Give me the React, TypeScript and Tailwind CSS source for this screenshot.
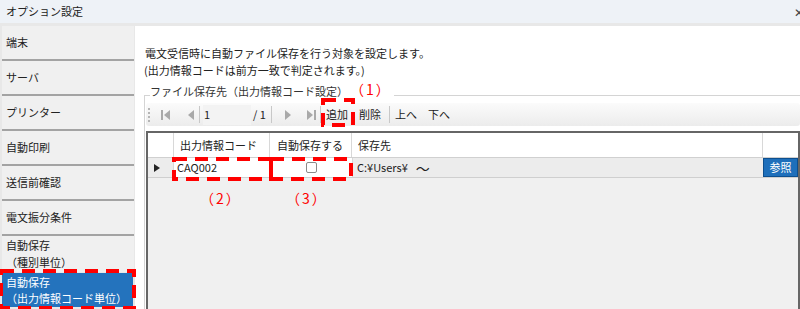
const font = { fontFamily: '"Noto Sans CJK JP", "Noto Sans", sans-serif' };

function DashBox({ className }: { className: string }) {
  return (
    <svg className={`pointer-events-none absolute ${className}`} preserveAspectRatio="none">
      <rect x="2" y="2" width="calc(100% - 4px)" height="calc(100% - 4px)" fill="none" stroke="#ff0000" strokeWidth="4" strokeDasharray="13 8" />
    </svg>
  );
}

function NavIcon({ kind }: { kind: 'first' | 'prev' | 'next' | 'last' }) {
  return (
    <svg width="12" height="12" viewBox="0 0 12 12" className="shrink-0">
      {kind === 'first' && (
        <>
          <rect x="1" y="1" width="2" height="10" fill="#a9a9a9" />
          <path d="M10 1 L4 6 L10 11 Z" fill="#a9a9a9" />
        </>
      )}
      {kind === 'prev' && <path d="M9 1 L3 6 L9 11 Z" fill="#a9a9a9" />}
      {kind === 'next' && <path d="M3 1 L9 6 L3 11 Z" fill="#a9a9a9" />}
      {kind === 'last' && (
        <>
          <path d="M2 1 L8 6 L2 11 Z" fill="#a9a9a9" />
          <rect x="9" y="1" width="2" height="10" fill="#a9a9a9" />
        </>
      )}
    </svg>
  );
}

const Sep = ({ className }: { className: string }) => <div className={`h-[17px] w-px bg-[#c8c8c8] ${className}`} />;

const menu = ['端末', 'サーバ', 'プリンター', '自動印刷', '送信前確認', '電文振分条件'];

export default function App() {
  return (
    <div className="h-[309px] w-[800px] overflow-hidden bg-[#e8e8e8] text-[11px] text-[#222]" style={font}>
      {/* title bar */}
      <div className="flex h-[23px] items-center justify-between bg-[#eef2f7] pl-[6px]">
        <span className="leading-none">オプション設定</span>
        <span className="mr-[-4px] text-[12px] leading-none text-[#444]">✕</span>
      </div>

      <div className="flex h-[286px] pt-[3px]">
        {/* sidebar */}
        <div className="flex w-[134px] flex-col bg-[#e8e8e8] pl-[2px]">
          {menu.map((m) => (
            <div key={m} className="flex h-[35px] items-center border-b-2 border-[#a3a3a3] bg-[#f0f0f0] pl-[4px] leading-none">
              {m}
            </div>
          ))}
          <div className="flex h-[36px] flex-col justify-center gap-[6px] bg-[#f0f0f0] pl-[4px] leading-none">
            <span>自動保存</span>
            <span>（種別単位）</span>
          </div>
          <div className="relative mt-[1px]">
            <div className="mr-[1px] flex h-[34px] flex-col justify-center gap-[5px] bg-[#2473bd] pl-[4px] leading-none text-white">
              <span>自動保存</span>
              <span>（出力情報コード単位）</span>
            </div>
            <DashBox className="left-[-3px] top-[-4px] h-[41px] w-[137px]" />
          </div>
        </div>

        {/* content */}
        <div className="ml-[1px] flex flex-1 flex-col bg-white pl-[9px]">
          <div className="flex flex-col gap-[4px] pt-[21px] leading-[13px]">
            <span className="pl-[1px]">電文受信時に自動ファイル保存を行う対象を設定します。</span>
            <span>(出力情報コードは前方一致で判定されます。)</span>
          </div>

          {/* group box */}
          <div className="relative mt-[18px] flex flex-1 flex-col border-l border-t border-[#d4d4d4] pl-[1px]">
            <div className="absolute left-[5px] top-[-14px] flex items-end bg-white pr-[2px] leading-none">
              <span className="text-[#333]">ファイル保存先（出力情報コード設定）</span>
              <span className="mb-[1px] ml-[2px] text-[14px] tracking-[2px] text-[#ff0000]">（1）</span>
            </div>

            {/* toolbar */}
            <div className="mt-[7px] flex h-[23px] items-center rounded-[3px] bg-gradient-to-b from-[#fbfbfb] to-[#ececec] pl-[2px] text-[#222]">
              <div className="flex h-[14px] w-[3px] flex-col justify-between">
                {[0, 1, 2, 3].map((i) => (
                  <div key={i} className="h-[2px] w-[2px] bg-[#b5b5b5]" />
                ))}
              </div>
              <div className="ml-[9px] flex items-center gap-[13px]">
                <NavIcon kind="first" />
                <NavIcon kind="prev" />
              </div>
              <Sep className="ml-[2px] mr-[3px]" />
              <div className="flex h-[20px] w-[48px] items-center bg-[#f3f3f3] pl-[1px]">1</div>
              <span className="ml-[2px]">/ 1</span>
              <Sep className="ml-[5px] mr-[10px]" />
              <div className="flex items-center gap-[11px]">
                <NavIcon kind="next" />
                <NavIcon kind="last" />
              </div>
              <Sep className="ml-[3px]" />
              <div className="relative ml-[5px]">
                <span>追加</span>
                <DashBox className="left-[-5px] top-[-8px] h-[29px] w-[34px]" />
              </div>
              <span className="ml-[11px]">削除</span>
              <Sep className="ml-[8px]" />
              <span className="ml-[5px]">上へ</span>
              <span className="ml-[11px]">下へ</span>
            </div>

            {/* grid */}
            <div className="relative mt-[5px] flex flex-1 flex-col border-x-2 border-t-2 border-[#666] bg-[#f0f0f0]">
              <div className="flex h-[25px] border-b border-[#d0d0d0] bg-white leading-none">
                <div className="w-[26px] border-r border-[#d8d8d8]" />
                <div className="flex w-[96px] items-center border-r border-[#d8d8d8] pl-[6px]">出力情報コード</div>
                <div className="flex w-[82px] items-center border-r border-[#d8d8d8] pl-[7px]">自動保存する</div>
                <div className="flex flex-1 items-center border-r border-[#d8d8d8] pl-[6px]">保存先</div>
                <div className="w-[35px]" />
              </div>
              <div className="flex h-[20px] border-b border-[#cfcfcf] bg-[#ececec] leading-none">
                <div className="flex w-[26px] items-center border-r border-[#d8d8d8] pl-[6px]">
                  <svg width="6" height="8" viewBox="0 0 6 8">
                    <path d="M0 0 L6 4 L0 8 Z" fill="#222" />
                  </svg>
                </div>
                <div className="flex w-[96px] items-center bg-white pl-[3px]">CAQ002</div>
                <div className="flex w-[82px] items-center justify-center bg-white">
                  <div className="h-[11px] w-[11px] rounded-[2px] border border-[#8a8a8a] bg-white" />
                </div>
                <div className="flex flex-1 items-center border-l border-[#d8d8d8] pl-[4px]">
                  C:¥Users¥<span className="ml-[8px] text-[14px]">〜</span>
                </div>
                <div className="flex w-[35px] items-center justify-center border border-[#0d4f8f] bg-[#1e6fbb] text-white">参照</div>
              </div>
              <div className="flex w-[230px] pl-[52px] pt-[13px] text-[14px] leading-none tracking-[2px] text-[#ff0000]">
                <span className="w-[86px]">（2）</span>
                <span>（3）</span>
              </div>
              <DashBox className="left-[24px] top-[24px] h-[24px] w-[101px]" />
              <DashBox className="left-[121px] top-[24px] h-[24px] w-[84px]" />
            </div>
          </div>
        </div>
      </div>
    </div>
  );
}
